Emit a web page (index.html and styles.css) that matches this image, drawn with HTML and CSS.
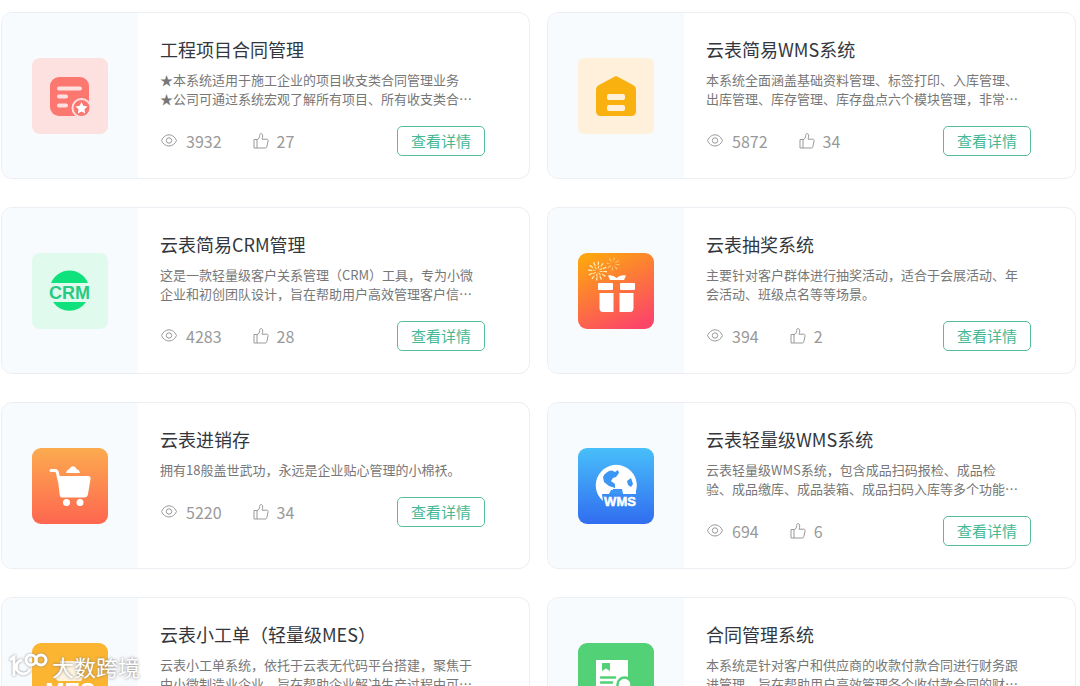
FILE: index.html
```html
<!DOCTYPE html>
<html lang="zh-CN">
<head>
    <meta charset="UTF-8">
    <meta name="viewport" content="width=device-width, initial-scale=1.0">
    <title>云表应用模板</title>
    <link rel="stylesheet" href="styles.css">
</head>
<body>
    <!-- Общие иконки -->
    <svg class="sprite" aria-hidden="true">
        <symbol id="eye" viewBox="0 0 18 16">
            <path d="M1.5 7.500C3 4 5.800 1.800 9 1.800S15 4 16.500 7.500C15 11 12.200 13 9 13S3 11 1.500 7.500Z"/>
            <circle cx="9" cy="7.500" r="2.700"/>
        </symbol>
        <symbol id="like" viewBox="0 0 16 16">
            <path d="M1 6.500H4V15H1ZM4 6.700C6 6 6.700 4.300 6.700 2.500 6.700 1 7.300.6 8 .6 9.200.6 9.700 1.600 9.700 3 9.700 4.200 9.400 5.200 9 6.200H13.800C14.800 6.200 15.300 6.900 15.100 7.800L13.800 13.800C13.600 14.600 13.100 15 12.300 15H4"/>
        </symbol>
    </svg>

    <main class="page">
        <div class="cards">
            <article class="card">
                <div class="media">
                    <svg class="logo" viewBox="0 0 76 76">
                        <rect width="76" height="76" rx="8" fill="#fde1e1"/>
                        <rect x="18" y="19" width="39" height="39" rx="9" fill="#fb7770"/>
                        <path d="M27 30.500H48M27 38.500H34M27 47.500H34" stroke="#fde1e1" stroke-width="4" stroke-linecap="round"/>
                        <circle cx="49.500" cy="50" r="9" fill="#fb7770" stroke="#fde1e1" stroke-width="2"/>
                        <path d="M49.500 44l1.800 3.800 4.200.6-3 2.900.7 4.200-3.700-2-3.700 2 .7-4.200-3-2.900 4.200-.6z" fill="#fff"/>
                    </svg>
                </div>
                <div class="info">
                    <h3>工程项目合同管理</h3>
                    <p>★本系统适用于施工企业的项目收支类合同管理业务<br>★公司可通过系统宏观了解所有项目、所有收支类合…</p>
                    <div class="bottom">
                        <span class="stat"><svg class="eye"><use href="#eye"/></svg>3932</span>
                        <span class="stat"><svg class="like"><use href="#like"/></svg>27</span>
                        <button>查看详情</button>
                    </div>
                </div>
            </article>

            <article class="card">
                <div class="media">
                    <svg class="logo" viewBox="0 0 76 76">
                        <rect width="76" height="76" rx="6" fill="#fff0db"/>
                        <path d="M35.500 19.200Q38 17.500 40.500 19.200L55 27Q58 28.500 58 32V53Q58 58 53 58H23Q18 58 18 53V32Q18 28.500 21 27Z" fill="#f8b10e"/>
                        <rect x="29" y="36" width="18" height="6" rx="2" fill="#fff0db"/>
                        <rect x="29" y="47" width="18" height="6" rx="2" fill="#fff0db"/>
                    </svg>
                </div>
                <div class="info">
                    <h3>云表简易WMS系统</h3>
                    <p>本系统全面涵盖基础资料管理、标签打印、入库管理、<br>出库管理、库存管理、库存盘点六个模块管理，非常…</p>
                    <div class="bottom">
                        <span class="stat"><svg class="eye"><use href="#eye"/></svg>5872</span>
                        <span class="stat"><svg class="like"><use href="#like"/></svg>34</span>
                        <button>查看详情</button>
                    </div>
                </div>
            </article>

            <article class="card">
                <div class="media">
                    <svg class="logo" viewBox="0 0 76 76">
                        <rect width="76" height="76" rx="8" fill="#e0faee"/>
                        <path d="M19 30A20 20 0 0 1 56 30ZM21 49H54A20 20 0 0 1 21 49Z" fill="#0fe27c"/>
                        <text x="37.500" y="45.500" font-size="18" fill="#27ca82">CRM</text>
                    </svg>
                </div>
                <div class="info">
                    <h3>云表简易CRM管理</h3>
                    <p>这是一款轻量级客户关系管理（CRM）工具，专为小微<br>企业和初创团队设计，旨在帮助用户高效管理客户信…</p>
                    <div class="bottom">
                        <span class="stat"><svg class="eye"><use href="#eye"/></svg>4283</span>
                        <span class="stat"><svg class="like"><use href="#like"/></svg>28</span>
                        <button>查看详情</button>
                    </div>
                </div>
            </article>

            <article class="card">
                <div class="media">
                    <svg class="logo" viewBox="0 0 76 76">
                        <defs>
                            <linearGradient id="gift" x1="0.200" y1="0" x2="0.700" y2="1">
                                <stop offset="0" stop-color="#fda510"/>
                                <stop offset="1" stop-color="#fc4668"/>
                            </linearGradient>
                        </defs>
                        <rect width="76" height="76" rx="9" fill="url(#gift)"/>
                        <g fill="none" stroke="#ffeeb5">
                            <circle cx="19.500" cy="18" r="7.500" stroke-width="4" stroke-dasharray="1.200 2.727"/>
                            <circle cx="19.500" cy="18" r="3.500" stroke-width="3" stroke-dasharray="0.900 1.849"/>
                            <circle cx="35" cy="11" r="4.500" stroke-width="4" stroke-dasharray="0.800 2.734" opacity="0.700"/>
                        </g>
                        <g fill="#fff">
                            <path d="M30 22.500Q35 21.500 38.500 25 42 21.500 48 22.500L46 27H32Z"/>
                            <rect x="20" y="30" width="15" height="7" rx="1"/>
                            <rect x="42" y="30" width="15" height="7" rx="1"/>
                            <path d="M21.500 40H35.500V59H25Q21.500 59 21.500 55ZM41.500 40H55.500V55Q55.500 59 52 59H41.500Z"/>
                        </g>
                    </svg>
                </div>
                <div class="info">
                    <h3>云表抽奖系统</h3>
                    <p>主要针对客户群体进行抽奖活动，适合于会展活动、年<br>会活动、班级点名等等场景。</p>
                    <div class="bottom">
                        <span class="stat"><svg class="eye"><use href="#eye"/></svg>394</span>
                        <span class="stat"><svg class="like"><use href="#like"/></svg>2</span>
                        <button>查看详情</button>
                    </div>
                </div>
            </article>

            <article class="card">
                <div class="media">
                    <svg class="logo" viewBox="0 0 76 76">
                        <defs>
                            <linearGradient id="cart" x1="0" y1="0" x2="0" y2="1">
                                <stop offset="0" stop-color="#fcab4f"/>
                                <stop offset="1" stop-color="#fe6650"/>
                            </linearGradient>
                        </defs>
                        <rect width="76" height="76" rx="9" fill="url(#cart)"/>
                        <path d="M19 22.500H23Q25 22.500 25.500 25L27 32" fill="none" stroke="#fff" stroke-width="3" stroke-linecap="round"/>
                        <g fill="#fff">
                            <path d="M25.500 28H56Q59 28 58.500 31L56 46Q55.500 49.500 52 49.500H30Q28 49.500 27.700 47Z"/>
                            <path d="M34 25L35 22.500Q37 22 39 19 41 17.500 43 19 45 22 47 22.500L48 25Z"/>
                            <circle cx="34.500" cy="54.500" r="3.500"/>
                            <circle cx="48" cy="54.500" r="3.500"/>
                        </g>
                    </svg>
                </div>
                <div class="info">
                    <h3>云表进销存</h3>
                    <p>拥有18般盖世武功，永远是企业贴心管理的小棉袄。</p>
                    <div class="bottom">
                        <span class="stat"><svg class="eye"><use href="#eye"/></svg>5220</span>
                        <span class="stat"><svg class="like"><use href="#like"/></svg>34</span>
                        <button>查看详情</button>
                    </div>
                </div>
            </article>

            <article class="card">
                <div class="media">
                    <svg class="logo" viewBox="0 0 76 76">
                        <defs>
                            <linearGradient id="globe" x1="0" y1="0" x2="0" y2="1">
                                <stop offset="0" stop-color="#48bffa"/>
                                <stop offset="1" stop-color="#316df0"/>
                            </linearGradient>
                        </defs>
                        <rect width="76" height="76" rx="9" fill="url(#globe)"/>
                        <path d="M25 53A20.500 20.500 0 1 1 58 43V46H45L44 41H35L33 46H24Z" fill="#fff"/>
                        <g fill="#3c96f6">
                            <path d="M25 29Q28 23 34 22.500L37 24 40 22 41 25 38 29 35 30 33 33 37 36 37 40 31 38 26 34Z"/>
                            <path d="M49 33L53 30 55 36 53 39 50 37Z"/>
                            <path d="M33 42H43L45 46H31Z"/>
                        </g>
                        <text x="42" y="58" font-size="13" fill="#fff" stroke="#fff" stroke-width="0.500">WMS</text>
                    </svg>
                </div>
                <div class="info">
                    <h3>云表轻量级WMS系统</h3>
                    <p>云表轻量级WMS系统，包含成品扫码报检、成品检<br>验、成品缴库、成品装箱、成品扫码入库等多个功能…</p>
                    <div class="bottom">
                        <span class="stat"><svg class="eye"><use href="#eye"/></svg>694</span>
                        <span class="stat"><svg class="like"><use href="#like"/></svg>6</span>
                        <button>查看详情</button>
                    </div>
                </div>
            </article>

            <article class="card">
                <div class="media">
                    <svg class="logo" viewBox="0 0 76 76">
                        <rect width="76" height="76" rx="9" fill="#fcb531"/>
                        <path d="M28 18H48L50 24 45 34H51L49 38H26L22 34 29 27Z" fill="#fff" opacity="0.850"/>
                        <text x="38.500" y="57" font-size="23" fill="#fff">MES</text>
                    </svg>
                </div>
                <div class="info">
                    <h3>云表小工单（轻量级MES）</h3>
                    <p>云表小工单系统，依托于云表无代码平台搭建，聚焦于<br>中小微制造业企业，旨在帮助企业解决生产过程中可…</p>
                    <div class="bottom">
                        <span class="stat"><svg class="eye"><use href="#eye"/></svg></span>
                        <span class="stat"><svg class="like"><use href="#like"/></svg></span>
                        <button>查看详情</button>
                    </div>
                </div>
            </article>

            <article class="card">
                <div class="media">
                    <svg class="logo" viewBox="0 0 76 76">
                        <rect width="76" height="76" rx="9" fill="#52d176"/>
                        <rect x="18" y="17" width="32" height="42" fill="#fff"/>
                        <path d="M24 20H32V28L28 25.500 24 28Z" fill="#52d176"/>
                        <path d="M23 34.500H37M23 39.500H34" stroke="#52d176" stroke-width="2.500" stroke-linecap="round"/>
                        <circle cx="46.500" cy="41.500" r="7" fill="#fff" stroke="#52d176" stroke-width="2.500"/>
                    </svg>
                </div>
                <div class="info">
                    <h3>合同管理系统</h3>
                    <p>本系统是针对客户和供应商的收款付款合同进行财务跟<br>进管理，旨在帮助用户高效管理各个收付款合同的财…</p>
                    <div class="bottom">
                        <span class="stat"><svg class="eye"><use href="#eye"/></svg></span>
                        <span class="stat"><svg class="like"><use href="#like"/></svg></span>
                        <button>查看详情</button>
                    </div>
                </div>
            </article>
        </div>

        <!-- Водяной знак поверх карточек -->
        <div class="watermark">
            <svg viewBox="0 0 40 26">
                <path d="M2 7L6 4V23M22 16A7 7 0 1 1 14 7"/>
                <circle cx="23" cy="7" r="5"/>
                <circle cx="33" cy="7" r="5"/>
            </svg>
            <span>大数跨境</span>
        </div>
    </main>
</body>
</html>
```

FILE: styles.css
```css
body {
    margin: 0;
    font-family: "Noto Sans CJK SC", "Noto Sans", sans-serif;
    background-color: #fff;
    color: #33373d;
}

.sprite {
    display: none;
}

.page {
    position: relative;
    height: 100vh;
    overflow: hidden;
}

.cards {
    display: grid;
    grid-template-columns: 1fr 1fr;
    gap: 28px 17px;
    padding: 12px 4px 28px 1px;
}

.card {
    display: flex;
    border: 1px solid #ebeef2;
    border-radius: 11px;
    overflow: hidden;
}

.media {
    display: flex;
    flex-shrink: 0;
    justify-content: center;
    align-items: center;
    width: 136px;
    background-color: #f8fbfe;
}

.logo {
    width: 76px;
    height: 76px;
}
.logo text {
    font-family: "Liberation Sans", Arial, sans-serif;
    font-weight: bold;
    text-anchor: middle;
}

.info {
    flex: 1;
    min-width: 0;
    padding: 24px 44px 22px 22px;
}

h3 {
    margin: 0 0 9px;
    font-size: 18px;
    font-weight: normal;
    line-height: 24px;
}

p {
    margin: 0 0 18px;
    font-size: 13px;
    line-height: 19px;
    color: #777;
    white-space: nowrap;
}

.bottom {
    display: flex;
    align-items: center;
    gap: 31px;
}

.stat {
    display: flex;
    align-items: center;
    gap: 8px;
    font-size: 16px;
    line-height: 24px;
    color: #999;
}
.stat svg {
    fill: none;
    stroke: #999;
    stroke-width: 1px;
    height: 16px;
}
.eye {
    width: 18px;
}
.like {
    width: 16px;
}

button {
    margin-left: auto;
    width: 88px;
    height: 30px;
    padding: 0;
    border: 1px solid #56bd9c;
    border-radius: 5px;
    background-color: #fff;
    font-family: inherit;
    font-size: 15px;
    line-height: 24px;
    color: #45b894;
    cursor: pointer;
}

.watermark {
    position: absolute;
    left: 8px;
    bottom: 5px;
    display: flex;
    align-items: center;
    gap: 4px;
    font-size: 22px;
    line-height: 30px;
    color: #fff;
    text-shadow: 0 0 3px #777;
}
.watermark svg {
    width: 40px;
    height: 26px;
    fill: none;
    stroke: #fff;
    stroke-width: 3px;
    filter: drop-shadow(0 0 1px #888);
}
```
